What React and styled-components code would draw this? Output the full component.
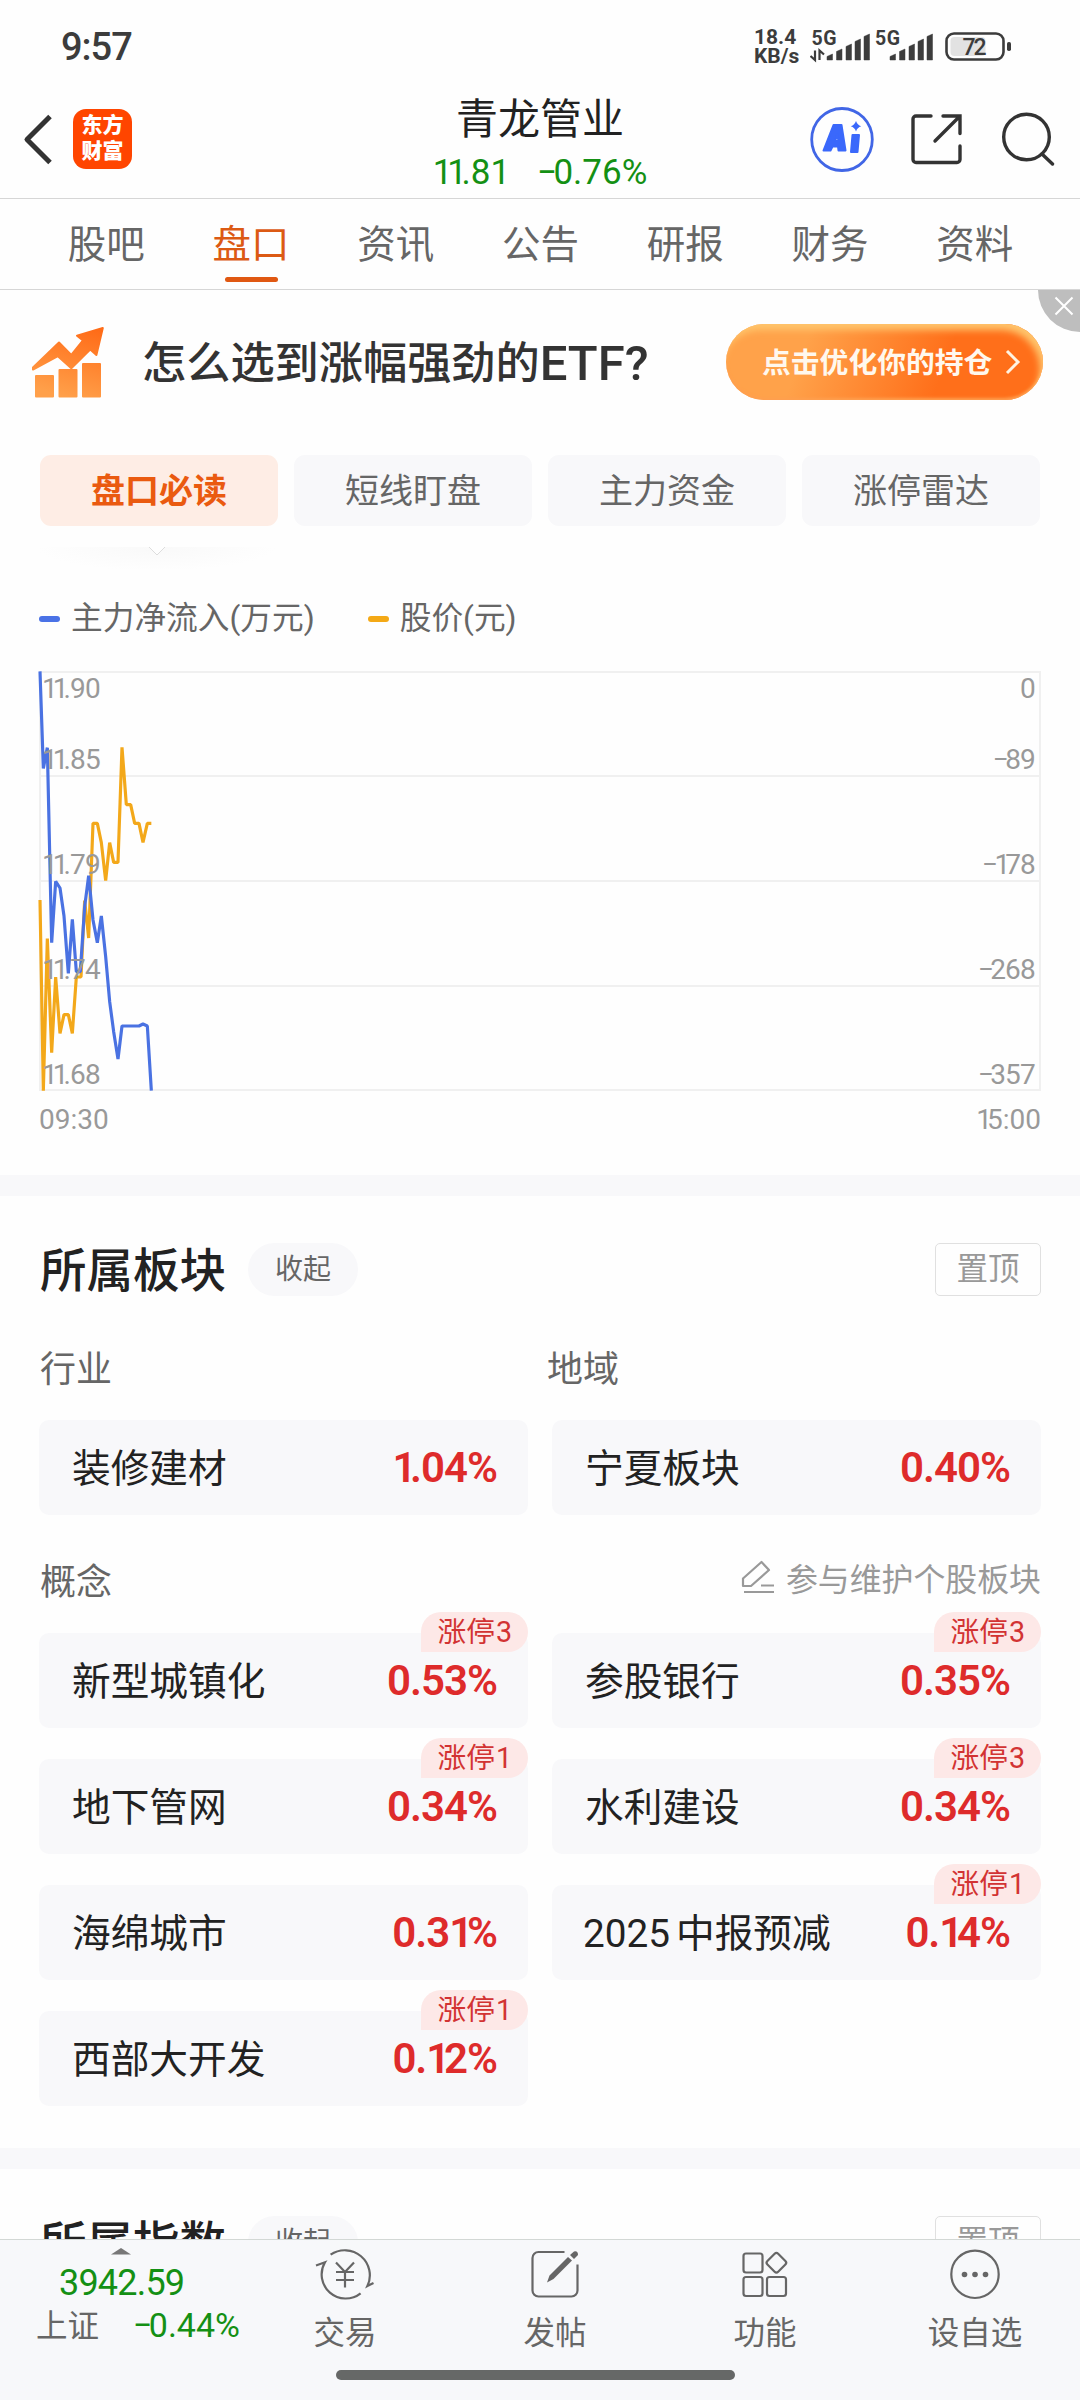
import React from "react";
import styled, { createGlobalStyle } from "styled-components";

const Global = createGlobalStyle`
  * { box-sizing: border-box; }
  html, body { margin: 0; padding: 0; background: #fefefe; }
  body {
    font-family: Roboto, "Noto Sans CJK SC", sans-serif;
    color: #222;
  }
`;

const Screen = styled.div`
  width: 1080px;
  height: 2400px;
  display: flex;
  flex-direction: column;
  overflow: hidden;
  background: #fefefe;
`;

const NumText = styled.span`
  font-size: ${(p) => p.$size}px;
  font-weight: ${(p) => p.$weight || 400};
  letter-spacing: ${(p) => p.$ls || 0}px;
  color: ${(p) => p.$color || "inherit"};
  white-space: nowrap;
`;
const Narrow = styled.span`
  letter-spacing: ${(p) => (p.$minus ? "-0.1em" : "-0.15em")};
`;

/* "1" and the minus sign are set tighter than the tabular figures */
const pieces = (text) => text.split(/([1−])/).filter(Boolean);
const Figures = ({ text }) =>
  pieces(text).map((part, i) =>
    part === "1" || part === "−" ? (
      <Narrow key={i} $minus={part === "−"}>{part}</Narrow>
    ) : (
      part
    )
  );
const Num = ({ children, ...rest }) => (
  <NumText {...rest}>
    <Figures text={children} />
  </NumText>
);

/* status bar */
const StatusBar = styled.div`
  height: 80px;
  flex: none;
  display: flex;
  justify-content: space-between;
  padding: 0 69px 0 61px;
  color: #3c3c3c;
`;
const Clock = styled.div`
  margin-top: 25px;
  font-size: 38px;
  line-height: 45px;
  font-weight: 500;
  letter-spacing: -1px;
`;
const StatusRight = styled.div`
  display: flex;
  align-items: flex-start;
`;
const Speed = styled.div`
  width: 56px;
  margin-top: 28px;
  font-size: 21px;
  line-height: 19px;
  font-weight: 700;
`;
const Signal = styled.svg`
  display: block;
  margin-top: 28px;
`;

/* header */
const Header = styled.header`
  height: 119px;
  flex: none;
  display: grid;
  grid-template-columns: 1fr auto 1fr;
  border-bottom: 1px solid #d6d6d6;
`;
const HeaderLeft = styled.div`
  display: flex;
  align-items: center;
  padding-left: 22px;
  gap: 21px;
`;
const Logo = styled.div`
  width: 59px;
  height: 60px;
  border-radius: 13px;
  background: #ff4500;
  color: #fff;
  font-size: 21px;
  font-weight: 900;
  line-height: 26px;
  padding-top: 3px;
  text-align: center;
`;
const StockTitle = styled.div`
  display: flex;
  flex-direction: column;
  align-items: center;
  gap: 3px;
  padding-top: 15px;
`;
const StockName = styled.div`
  font-size: 42px;
  line-height: 50px;
`;
const StockPrice = styled.div`
  display: flex;
  gap: 32px;
  line-height: 50px;
  color: #149014;
`;
const HeaderRight = styled.div`
  display: flex;
  align-items: center;
  justify-content: flex-end;
  padding-right: 25px;
`;

/* tabs */
const Tabs = styled.nav`
  height: 91px;
  flex: none;
  display: flex;
  padding: 0 33px 0 34px;
  border-bottom: 1px solid #d6d6d6;
`;
const Tab = styled.div`
  flex: 1;
  display: flex;
  flex-direction: column;
  align-items: center;
  font-size: 38.5px;
  line-height: 52px;
  padding-top: 20px;
  color: ${(p) => (p.$active ? "#dc5a14" : "#666")};
  &::after {
    content: "";
    margin-top: 6px;
    width: 53px;
    height: 5px;
    border-radius: 3px;
    background: ${(p) => (p.$active ? "#e05812" : "transparent")};
  }
`;

/* promotion */
const Promo = styled.div`
  position: relative;
  height: 165px;
  flex: none;
  display: flex;
  align-items: flex-start;
  padding: 34px 37px 0 31px;
`;
const PromoText = styled.div`
  margin: 10px auto 0 36px;
  display: flex;
  align-items: center;
  height: 60px;
  font-size: 44.2px;
  font-weight: 500;
  color: #333;
  line-height: 60px;
`;
const PromoButton = styled.div`
  width: 317px;
  height: 76px;
  border-radius: 38px;
  display: flex;
  align-items: center;
  justify-content: space-between;
  padding: 0 21px 4px 36px;
  font-size: 28.8px;
  font-weight: 700;
  color: #fff8ee;
  background: linear-gradient(110deg, #ffa24a 25%, #ff6f1a 68%);
  box-shadow: inset -4px 7px 7px -1px #ffc56c, inset 0 -2px 3px #ff9f50;
  svg { margin-top: 4px; }
`;
const PromoClose = styled.div`
  position: absolute;
  right: 0;
  top: 0;
  width: 42px;
  height: 42px;
  border-radius: 0 0 0 42px;
  background: #bebebe;
  svg { display: block; margin: 6px 0 0 16px; }
`;

/* segment buttons */
const Segments = styled.div`
  display: grid;
  grid-template-columns: repeat(4, 1fr);
  gap: 16px;
  padding: 0 40px;
  flex: none;
`;
const Segment = styled.div`
  height: 71px;
  border-radius: 11px;
  display: flex;
  align-items: center;
  justify-content: center;
  padding-bottom: 4px;
  font-size: 34px;
  background: ${(p) => (p.$active ? "#feede5" : "#f8f8fa")};
  color: ${(p) => (p.$active ? "#ea5a10" : "#666")};
  font-weight: ${(p) => (p.$active ? 700 : 400)};
`;
const Notch = styled.div`
  margin: 21px 0 0 35px;
  width: 243px;
  height: 24px;
  flex: none;
  background: radial-gradient(ellipse at 50% 0, #f9f9f9, #fefefe 70%);
  svg { display: block; margin: 0 auto; }
`;

/* legend + chart */
const Legend = styled.div`
  height: 52px;
  margin-top: 20px;
  flex: none;
  display: flex;
  align-items: center;
  padding: 0 39px;
  gap: 53px;
  font-size: 31.7px;
  color: #666;
`;
const LegendItem = styled.div`
  display: flex;
  align-items: center;
  gap: 11px;
  line-height: 48px;
  padding-top: 3px;
  &::before {
    content: "";
    width: 21px;
    height: 6px;
    border-radius: 3px;
    background: ${(p) => p.$color};
  }
`;
const ChartSvg = styled.svg`
  display: block;
  flex: none;
  margin-top: 28px;
  text { font-family: Roboto, sans-serif; fill: #999; }
`;

const Divider = styled.div`
  height: 21px;
  flex: none;
  background: #f8f8fa;
`;

/* sections */
const Scroll = styled.main`
  flex: 1;
  min-height: 0;
  overflow: hidden;
  display: flex;
  flex-direction: column;
`;
const Section = styled.section`
  flex: none;
  padding: 47px 39px 42px 39px;
`;
const SectionHead = styled.div`
  display: flex;
  align-items: center;
  height: 53px;
`;
const SectionTitle = styled.h2`
  margin: 3px 22px 0 1px;
  font-size: 46.5px;
  line-height: 53px;
  font-weight: 500;
`;
const Pill = styled.div`
  width: 110px;
  height: 53px;
  border-radius: 27px;
  background: #f8f8fa;
  color: #666;
  font-size: 28px;
  line-height: 53px;
  text-align: center;
`;
const PinButton = styled.div`
  width: 106px;
  height: 53px;
  margin-left: auto;
  border: 1px solid #e0e0e0;
  border-radius: 5px;
  color: #999;
  font-size: 31.5px;
  line-height: 51px;
  text-align: center;
`;
const Columns = styled.div`
  display: grid;
  grid-template-columns: 1fr 1fr;
  column-gap: 24px;
  row-gap: 31px;
`;
const GroupLabels = styled.div`
  display: grid;
  grid-template-columns: 507px 1fr;
  height: 53px;
  margin: 48px 0 23px;
  padding-left: 1px;
  font-size: 36px;
  line-height: 53px;
  color: #666;
`;
const ConceptHead = styled.div`
  display: flex;
  align-items: center;
  justify-content: space-between;
  height: 53px;
  margin: 37px 0 28px;
  padding-left: 1px;
  font-size: 36px;
  color: #666;
`;
const Maintain = styled.div`
  display: flex;
  align-items: center;
  gap: 11px;
  font-size: 31.9px;
  color: #999;
  padding-bottom: 4px;
`;
const Card = styled.div`
  position: relative;
  height: 95px;
  border-radius: 10px;
  background: #f8f8fa;
  display: flex;
  align-items: center;
  justify-content: space-between;
  padding: 0 31px 0 33px;
`;
const CardName = styled.span`
  font-size: 38.7px;
  padding-bottom: 5px;
`;
const Year = styled.span`
  margin: 0 6px 0 -2px;
`;
const Badge = styled.div`
  position: absolute;
  right: 0;
  top: -21px;
  height: 40px;
  padding: 0 16px 0 17px;
  border-radius: 20px 20px 20px 0;
  background: #fde8e7;
  color: #d23333;
  font-size: 28.7px;
  line-height: 40px;
  span { margin-left: 1px; }
`;

/* bottom bar */
const BottomBar = styled.footer`
  height: 161px;
  flex: none;
  border-top: 1px solid #d3d8d5;
  background: #f7f8fa;
`;
const BottomRow = styled.div`
  display: flex;
  height: 130px;
`;
const IndexCell = styled.div`
  width: 240px;
  display: flex;
  flex-direction: column;
  color: #149014;
`;
const Caret = styled.svg`
  display: block;
  margin: 8px 0 0 111px;
`;
const IndexValue = styled.div`
  margin: 6px 0 0 59px;
  line-height: 44px;
`;
const IndexRow = styled.div`
  display: flex;
  justify-content: space-between;
  align-items: center;
  padding-left: 36px;
  margin-top: -9px;
  height: 44px;
  color: #666;
  font-size: 31.5px;
`;
const IndexName = styled.span`
  padding-bottom: 4px;
`;
const BottomItem = styled.div`
  width: 210px;
  display: flex;
  flex-direction: column;
  align-items: center;
  font-size: 31.5px;
  line-height: 44px;
  color: #666;
  svg { display: block; margin: 7px 0 11px; }
`;
const HomeBar = styled.div`
  width: 399px;
  height: 10px;
  border-radius: 5px;
  margin-left: 336px;
  background: #666867;
`;

const bars = [
  [0, 26, 6],
  [9.5, 21, 11],
  [19, 16, 16],
  [28, 11, 21],
  [37, 6, 26],
];
const SignalBars = ({ x }) =>
  bars.map(([dx, y, h]) => (
    <path key={dx} fill="#3c3c3c" d={`M${x + dx} ${y + 2.5}l5.5 -2.5v${h}h-5.5z`} stroke="#3c3c3c" strokeWidth="0.5" />
  ));

const StatusIcons = () => (
  <Signal width="201" height="40" viewBox="0 0 201 40">
    <g fill="#3c3c3c" fontFamily="Roboto, sans-serif" fontWeight="700">
      <text x="1.5" y="17" fontSize="19.500" textLength="25">5G</text>
      <text x="65" y="17" fontSize="19.500" textLength="25">5G</text>
    </g>
    <path d="M5 22.500v9.500L0.500 28M9.500 32v-9.500l4.500 4" fill="none" stroke="#3c3c3c" strokeWidth="2.200" />
    <SignalBars x={17} />
    <SignalBars x={80} />
    <rect x="136.500" y="5.500" width="57" height="26" rx="7.500" fill="none" stroke="#3c3c3c" strokeWidth="2.600" />
    <rect x="140.500" y="9" width="35" height="19" rx="4" fill="#e2e2e2" />
    <rect x="197" y="14" width="4" height="9" rx="1.800" fill="#3c3c3c" />
    <text x="152.500" y="27" fontSize="23" fontWeight="500" textLength="24" fill="#3c3c3c" fontFamily="Roboto, sans-serif">72</text>
  </Signal>
);

const HeaderIcon = styled.svg`
  display: block;
  margin-right: ${(p) => p.$gap || 0}px;
`;

const AiIcon = () => (
  <HeaderIcon width="64" height="66" viewBox="0 0 64 66" $gap={37}>
    <ellipse cx="32" cy="33.500" rx="30.300" ry="31" fill="none" stroke="#4166e6" strokeWidth="2.800" />
    <path fill="#3a68fb" stroke="#3a68fb" strokeWidth="2" strokeLinejoin="round" fillRule="evenodd" d="M23.500 19h8l4 25.500h-7l-.5-4h-5.500l-2 4h-7zM27.700 28l-2.600 7h3.200z" />
    <path fill="#3a68fb" stroke="#3a68fb" strokeWidth="2" strokeLinejoin="round" d="M42.500 29h6.500l-1.500 17h-6.500z" />
    <path fill="#3a68fb" d="M46 15q1.300 4 5.200 5.200q-3.900 1.200-5.200 5.200q-1.300-4-5.200-5.200q3.900-1.200 5.200-5.200z" />
  </HeaderIcon>
);

const ShareIcon = () => (
  <HeaderIcon width="52" height="52" viewBox="0 0 52 52" fill="none" stroke="#333" strokeWidth="3.400" strokeLinecap="round" $gap={38}>
    <path d="M20 3H5a3 3 0 0 0-3 3V46.500a3 3 0 0 0 3 3h41a3 3 0 0 0 3-3V33" />
    <path d="M32 3H49V20.500M48 4L24 28" />
  </HeaderIcon>
);

const SearchIcon = () => (
  <HeaderIcon width="54" height="54" viewBox="0 0 54 54" fill="none" stroke="#333" strokeWidth="3.400" strokeLinecap="round">
    <circle cx="25.500" cy="25" r="22.800" />
    <path d="M41 42L51.500 52" />
  </HeaderIcon>
);

const PromoIcon = () => (
  <svg width="75" height="74" viewBox="31 324 75 74" fill="url(#promoFill)" stroke="url(#promoFill)" strokeWidth="2" strokeLinejoin="round">
    <defs>
      <linearGradient id="promoFill" gradientUnits="userSpaceOnUse" x1="85" y1="327" x2="65" y2="397">
        <stop offset="0" stopColor="#ff6c18" />
        <stop offset="1" stopColor="#ffa04a" />
      </linearGradient>
    </defs>
    <path d="M33 369V367.500L59 342.500L71.300 355L83 340.500L77 335.700L102.800 328L96.400 355L90.200 349.500L71.300 368.300L57.900 356.200L33 369.500z" />
    <rect x="36" y="376" width="17" height="20.500" />
    <rect x="59.500" y="370" width="17" height="26.500" />
    <rect x="83" y="364" width="17" height="32.500" />
  </svg>
);

const grid = [104, 209, 314];
const leftLabels = [["11.90", 27], ["11.85", 98], ["11.79", 203], ["11.74", 308], ["11.68", 413]];
const rightLabels = [["0", 27], ["−89", 98], ["−178", 203], ["−268", 308], ["−357", 413]];
const priceLine =
  "60,750 70,1322 82,866 95,1208 107,981 120,1150 132,1094 145,1094 157,1150 169,981 183,981 194,752 206,864 219,520 232,520 244,578 257,692 269,578 281,637 294,637 306,292 319,464 332,464 344,520 357,520 369,577 382,520 394,520";
const flowLine =
  "60,64 70,355 82,293 95,878 107,694 120,714 132,798 145,970 157,808 169,965 181,965 194,770 206,677 219,810 232,878 244,798 257,920 269,1055 281,1145 294,1227 306,1128 357,1128 369,1122 382,1128 394,1322";

const Label = ({ x, y, anchor, ls = -0.8, children }) => (
  <text x={x} y={y} fontSize="28" textAnchor={anchor} letterSpacing={ls}>
    {pieces(children).map((part, i) => (
      <tspan key={i} letterSpacing={part === "1" ? -5 : part === "−" ? -3.5 : ls}>{part}</tspan>
    ))}
  </text>
);

const Chart = () => (
  <ChartSvg width="1080" height="504" viewBox="0 0 1080 504">
    <g fill="none" stroke="#f0f0f0" strokeWidth="2">
      <rect x="40" y="1" width="1000" height="418" />
      {grid.map((y) => (
        <path key={y} d={`M39 ${y + 1}H1041`} />
      ))}
    </g>
    <g transform="translate(20 -21) scale(0.33333)" fill="none" strokeWidth="9.500" strokeLinejoin="bevel">
      <polyline points={priceLine} stroke="#f3a81a" />
      <polyline points={flowLine} stroke="#4a72e2" />
    </g>
    {leftLabels.map(([t, y]) => (
      <Label key={t} x={42} y={y}>{t}</Label>
    ))}
    {rightLabels.map(([t, y]) => (
      <Label key={t} x={1035} y={y} anchor="end">{t}</Label>
    ))}
    <Label x={39} y={458} ls={0}>09:30</Label>
    <Label x={1041} y={458} ls={0} anchor="end">15:00</Label>
  </ChartSvg>
);

const BoardCard = ({ name, year, pct, badge }) => (
  <Card>
    <CardName>{year && <Year>{year}</Year>}{name}</CardName>
    <Num $size={42} $weight={600} $ls={-1} $color="#de2b2b">{pct}</Num>
    {badge && <Badge>涨停<span>{badge}</span></Badge>}
  </Card>
);

const Head = ({ title }) => (
  <SectionHead>
    <SectionTitle>{title}</SectionTitle>
    <Pill>收起</Pill>
    <PinButton>置顶</PinButton>
  </SectionHead>
);

const concepts = [
  { name: "新型城镇化", pct: "0.53%", badge: "3" },
  { name: "参股银行", pct: "0.35%", badge: "3" },
  { name: "地下管网", pct: "0.34%", badge: "1" },
  { name: "水利建设", pct: "0.34%", badge: "3" },
  { name: "海绵城市", pct: "0.31%" },
  { name: "中报预减", year: "2025", pct: "0.14%", badge: "1" },
  { name: "西部大开发", pct: "0.12%", badge: "1" },
];

const stroke = { fill: "none", stroke: "#666", strokeWidth: 2.2 };

export default function App() {
  return (
    <Screen>
      <Global />
      <StatusBar>
        <Clock>9:57</Clock>
        <StatusRight>
          <Speed>18.4<br />KB/s</Speed>
          <StatusIcons />
        </StatusRight>
      </StatusBar>
      <Header>
        <HeaderLeft>
          <svg width="30" height="52" viewBox="0 0 30 52" fill="none" stroke="#333" strokeWidth="5" strokeLinejoin="round">
            <path d="M28 3.500L5 26.500L28 49.500" />
          </svg>
          <Logo>东方<br />财富</Logo>
        </HeaderLeft>
        <StockTitle>
          <StockName>青龙管业</StockName>
          <StockPrice>
            <Num $size={35}>11.81</Num>
            <Num $size={35}>−0.76%</Num>
          </StockPrice>
        </StockTitle>
        <HeaderRight>
          <AiIcon />
          <ShareIcon />
          <SearchIcon />
        </HeaderRight>
      </Header>
      <Tabs>
        {["股吧", "盘口", "资讯", "公告", "研报", "财务", "资料"].map((t) => (
          <Tab key={t} $active={t === "盘口"}>{t}</Tab>
        ))}
      </Tabs>
      <Scroll>
        <Promo>
          <PromoIcon />
          <PromoText>怎么选到涨幅强劲的<Num $size={49} $weight={500}>ETF?</Num></PromoText>
          <PromoButton>
            点击优化你的持仓
            <svg width="18" height="26" viewBox="0 0 18 26" fill="none" stroke="#fff3e2" strokeWidth="3">
              <path d="M3 2L14 13L3 24" />
            </svg>
          </PromoButton>
          <PromoClose>
            <svg width="20" height="20" viewBox="0 0 20 20" stroke="#fff" strokeWidth="2">
              <path d="M1.500 1.500L18.500 18.500M18.500 1.500L1.500 18.500" />
            </svg>
          </PromoClose>
        </Promo>
        <Segments>
          {["盘口必读", "短线盯盘", "主力资金", "涨停雷达"].map((t, i) => (
            <Segment key={t} $active={i === 0}>{t}</Segment>
          ))}
        </Segments>
        <Notch>
          <svg width="18" height="10" viewBox="0 0 18 10" fill="#fefefe" stroke="#ddd" strokeWidth="1">
            <path d="M1 0L9 8L17 0" />
          </svg>
        </Notch>
        <Legend>
          <LegendItem $color="#4a72e6">主力净流入(万元)</LegendItem>
          <LegendItem $color="#f4a916">股价(元)</LegendItem>
        </Legend>
        <Chart />
        <Divider />
        <Section>
          <Head title="所属板块" />
          <GroupLabels>
            <span>行业</span>
            <span>地域</span>
          </GroupLabels>
          <Columns>
            <BoardCard name="装修建材" pct="1.04%" />
            <BoardCard name="宁夏板块" pct="0.40%" />
          </Columns>
          <ConceptHead>
            概念
            <Maintain>
              <svg width="34" height="34" viewBox="0 0 34 34" fill="none" stroke="#999" strokeWidth="2.200" strokeLinejoin="round">
                <path d="M2 18.500L20.500 2L28 10L10 26H2zM20 25.500H33M3 32H33" />
              </svg>
              参与维护个股板块
            </Maintain>
          </ConceptHead>
          <Columns>
            {concepts.map((item) => (
              <BoardCard key={item.name} {...item} />
            ))}
          </Columns>
        </Section>
        <Divider />
        <Section>
          <Head title="所属指数" />
        </Section>
      </Scroll>
      <BottomBar>
        <BottomRow>
          <IndexCell>
            <Caret width="20" height="7" viewBox="0 0 20 7" fill="#777">
              <path d="M0 6.500L10 0L20 6.500z" />
            </Caret>
            <IndexValue><Num $size={36} $ls={-0.8}>3942.59</Num></IndexValue>
            <IndexRow>
              <IndexName>上证</IndexName>
              <Num $size={34} $color="#149014">−0.44%</Num>
            </IndexRow>
          </IndexCell>
          <BottomItem>
            <svg width="60" height="54" viewBox="316 2247 60 54" {...stroke}>
              <path d="M331.600 2254.700A25 25 0 0 1 368.400 2286L374.500 2283" />
              <path d="M361.600 2293.300A24 24 0 0 1 326 2262.300L317 2265.500" />
              <path d="M337 2262.500L346 2272L355 2262.500M346 2272V2287.500M337 2272H355M337 2280H355" />
            </svg>
            交易
          </BottomItem>
          <BottomItem>
            <svg width="60" height="54" viewBox="525.500 2247 60 54" {...stroke}>
              <path d="M565 2252H539a6 6 0 0 0-6 6V2290.500a6 6 0 0 0 6 6H572a6 6 0 0 0 6-6V2264.500" />
              <path fill="#666" stroke="none" d="M547.500 2282.500L550 2275.500L568.500 2257L572.500 2260.500L554 2279zM570.500 2255L574.500 2251.500Q578.500 2250.500 578.500 2255L574.500 2259z" />
            </svg>
            发帖
          </BottomItem>
          <BottomItem>
            <svg width="60" height="54" viewBox="735 2247 60 54" {...stroke}>
              <rect x="743.500" y="2253.500" width="19" height="19" rx="2.500" />
              <rect x="743.500" y="2277" width="19" height="19" rx="2.500" />
              <rect x="767" y="2277" width="19" height="19" rx="2.500" />
              <rect x="768.800" y="2255.200" width="15.200" height="15.200" rx="2.500" transform="rotate(45 776.400 2262.800)" />
            </svg>
            功能
          </BottomItem>
          <BottomItem>
            <svg width="60" height="54" viewBox="944.500 2247 60 54" {...stroke}>
              <circle cx="974.500" cy="2274.300" r="23.700" />
              <g fill="#666" stroke="none">
                <circle cx="964" cy="2274.500" r="2.800" />
                <circle cx="974.500" cy="2274.500" r="2.800" />
                <circle cx="985" cy="2274.500" r="2.800" />
              </g>
            </svg>
            设自选
          </BottomItem>
        </BottomRow>
        <HomeBar />
      </BottomBar>
    </Screen>
  );
}
